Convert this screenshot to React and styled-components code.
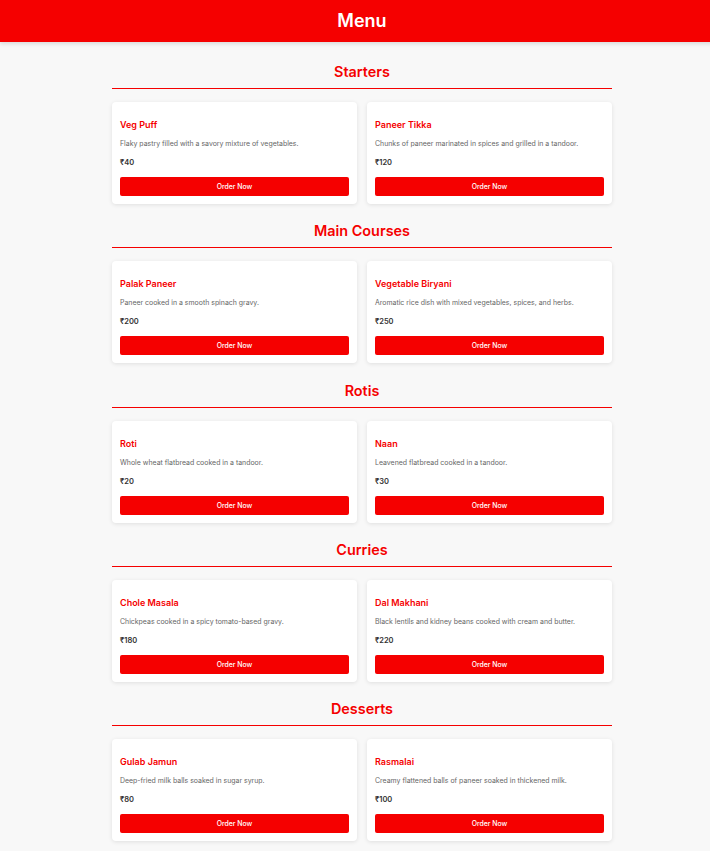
import React from "react";
import styled, { createGlobalStyle } from "styled-components";

const Global = createGlobalStyle`
  html, body { margin: 0; padding: 0; }
  body {
    background: #f8f8f8;
    font-family: Inter, "Noto Sans", "DejaVu Sans", sans-serif;
    -webkit-font-smoothing: antialiased;
    overflow-x: hidden;
  }
  #root { width: 724px; }
`;

const RED = "#f50000";

const Header = styled.header`
  height: 42px;
  background: ${RED};
  display: flex;
  align-items: center;
  justify-content: center;
  box-shadow: 0 2px 4px rgba(0, 0, 0, 0.12);
`;

const HeaderTitle = styled.h1`
  margin: 0;
  color: #fff;
  font-size: 18px;
  font-weight: 600;
  line-height: 1;
`;

const Main = styled.main`
  width: 500px;
  margin: 0 auto;
  padding: 20px 0 10px;
  display: flex;
  flex-direction: column;
  gap: 17.3px;
`;

const Section = styled.section`
  display: flex;
  flex-direction: column;
`;

const SectionTitle = styled.h2`
  margin: 0 0 13px;
  padding-bottom: 6px;
  border-bottom: 1px solid ${RED};
  color: ${RED};
  font-size: 14.4px;
  font-weight: 600;
  line-height: 20px;
  text-align: center;
`;

const Grid = styled.div`
  display: grid;
  grid-template-columns: 1fr 1fr;
  gap: 10px;
`;

const Card = styled.div`
  background: #fff;
  border-radius: 4px;
  box-shadow: 0 1px 4px rgba(0, 0, 0, 0.1);
  padding: 8px;
  display: flex;
  flex-direction: column;
`;

const ItemName = styled.h3`
  margin: 8px 0 0;
  color: ${RED};
  font-size: 9px;
  font-weight: 600;
  line-height: 13px;
`;

const ItemDesc = styled.p`
  margin: 8px 0 0;
  color: #666;
  font-size: 6.95px;
  line-height: 10px;
`;

const Price = styled.p`
  margin: 9px 0 0;
  color: #333;
  font-size: 7.5px;
  font-weight: 600;
  line-height: 10px;
`;

const OrderButton = styled.button`
  margin-top: 9px;
  height: 19px;
  border: none;
  border-radius: 2px;
  background: ${RED};
  color: #fff;
  font-family: inherit;
  font-size: 6.9px;
  font-weight: 500;
  cursor: pointer;
`;

const menu = [
  {
    title: "Starters",
    items: [
      { name: "Veg Puff", desc: "Flaky pastry filled with a savory mixture of vegetables.", price: 40 },
      { name: "Paneer Tikka", desc: "Chunks of paneer marinated in spices and grilled in a tandoor.", price: 120 },
    ],
  },
  {
    title: "Main Courses",
    items: [
      { name: "Palak Paneer", desc: "Paneer cooked in a smooth spinach gravy.", price: 200 },
      { name: "Vegetable Biryani", desc: "Aromatic rice dish with mixed vegetables, spices, and herbs.", price: 250 },
    ],
  },
  {
    title: "Rotis",
    items: [
      { name: "Roti", desc: "Whole wheat flatbread cooked in a tandoor.", price: 20 },
      { name: "Naan", desc: "Leavened flatbread cooked in a tandoor.", price: 30 },
    ],
  },
  {
    title: "Curries",
    items: [
      { name: "Chole Masala", desc: "Chickpeas cooked in a spicy tomato-based gravy.", price: 180 },
      { name: "Dal Makhani", desc: "Black lentils and kidney beans cooked with cream and butter.", price: 220 },
    ],
  },
  {
    title: "Desserts",
    items: [
      { name: "Gulab Jamun", desc: "Deep-fried milk balls soaked in sugar syrup.", price: 80 },
      { name: "Rasmalai", desc: "Creamy flattened balls of paneer soaked in thickened milk.", price: 100 },
    ],
  },
];

export default function App() {
  return (
    <>
      <Global />
      <Header>
        <HeaderTitle>Menu</HeaderTitle>
      </Header>
      <Main>
        {menu.map((section) => (
          <Section key={section.title}>
            <SectionTitle>{section.title}</SectionTitle>
            <Grid>
              {section.items.map((item) => (
                <Card key={item.name}>
                  <ItemName>{item.name}</ItemName>
                  <ItemDesc>{item.desc}</ItemDesc>
                  <Price>₹{item.price}</Price>
                  <OrderButton>Order Now</OrderButton>
                </Card>
              ))}
            </Grid>
          </Section>
        ))}
      </Main>
    </>
  );
}
